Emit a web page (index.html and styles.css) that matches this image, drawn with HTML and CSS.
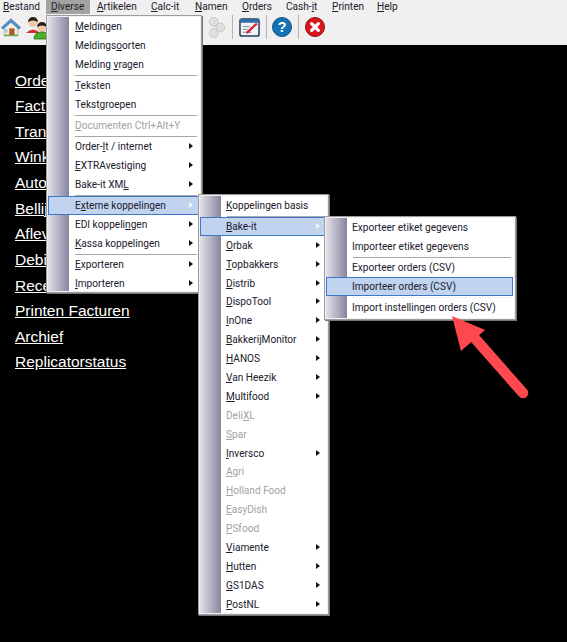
FILE: index.html
```html
<!DOCTYPE html>
<html lang="nl">
<head>
<meta charset="utf-8">
<title>Diverse</title>
<link rel="stylesheet" href="styles.css">
</head>
<body>
<nav class="menubar">
  <span class="top"><u>B</u>estand</span>
  <span class="top active"><u>D</u>iverse</span>
  <span class="top"><u>A</u>rtikelen</span>
  <span class="top"><u>C</u>alc-it</span>
  <span class="top"><u>N</u>amen</span>
  <span class="top"><u>O</u>rders</span>
  <span class="top">Cash-<u>i</u>t</span>
  <span class="top"><u>P</u>rinten</span>
  <span class="top"><u>H</u>elp</span>
</nav>
<div class="toolbar">
  <svg class="tool house" width="20" height="21" viewBox="0 0 22 24"><path d="M3 11v10h16V11L11 4z" fill="#f4efe2" stroke="#b9b3a4"/><path d="M0 12 11 2l11 10-2 2-9-8-9 8z" fill="#4f8fd0" stroke="#2b659f" stroke-width=".6"/><rect x="9" y="13" width="6" height="8" fill="#b0552c"/><rect x="4" y="14" width="3" height="4" fill="#9cc8ea"/><path d="M3 21h16" stroke="#6aa84f" stroke-width="2"/></svg>
  <svg class="tool people" width="26" height="25" viewBox="0 0 26 25"><circle cx="8" cy="7" r="5" fill="#f3c9a5"/><path d="M3 7a5 5 0 0 1 10 0q-5-3-10 0z" fill="#222"/><path d="M1 18q7-7 14 0z" fill="#c33"/><circle cx="17" cy="12" r="5" fill="#f3c9a5"/><path d="M12 12a5 5 0 0 1 10 0q-5-3-10 0z" fill="#222"/><path d="M9 24q0-7 8-7t8 7z" fill="#4bb02e" stroke="#1d6f12" stroke-width=".8"/></svg>
  <span class="tool-hidden"></span>
  <svg class="tool" width="19" height="21" viewBox="0 0 20 22"><g fill="#e6e6e6" stroke="#bdbdbd"><circle cx="7" cy="5" r="4.5"/><circle cx="14" cy="11" r="4.5"/><circle cx="7" cy="17" r="4.5"/></g><g fill="#f4f4f4" stroke="#c8c8c8"><circle cx="7" cy="5" r="1.5"/><circle cx="14" cy="11" r="1.5"/><circle cx="7" cy="17" r="1.5"/></g></svg>
  <i class="tool-sep"></i>
  <svg class="tool" width="21" height="20" viewBox="0 0 22 21"><rect x="1" y="2" width="20" height="18" rx="2" fill="#eef3f8" stroke="#24415f" stroke-width="1.6"/><rect x="1" y="2" width="20" height="4" fill="#2d6ca5"/><path d="M4 10h7M4 13h5M4 16h9" stroke="#7d8c9c"/><path d="M7 16 18 6l1.5 1.5L9 17.5z" fill="#d8232a"/></svg>
  <i class="tool-sep"></i>
  <svg class="tool" width="20" height="20" viewBox="0 0 21 21"><circle cx="10.500" cy="10.500" r="10" fill="#1772b4" stroke="#0d4f80"/><text class="help-mark" x="10.500" y="16" text-anchor="middle">?</text></svg>
  <i class="tool-sep"></i>
  <svg class="tool" width="20" height="20" viewBox="0 0 21 21"><circle cx="10.500" cy="10.500" r="10" fill="#d9161c" stroke="#8e0c10"/><path d="M7 7l7 7M14 7l-7 7" stroke="#fff" stroke-width="3.400" stroke-linecap="round"/></svg>
</div>
<main class="links">
  <a href="#">Orders</a>
  <a href="#">Facturen</a>
  <a href="#">Transport</a>
  <a href="#">Winkels</a>
  <a href="#">Automaten</a>
  <a href="#">Bellijst</a>
  <a href="#">Afleveringen</a>
  <a href="#">Debiteuren</a>
  <a href="#">Recepten</a>
  <a href="#">Printen Facturen</a>
  <a href="#">Archief</a>
  <a href="#">Replicatorstatus</a>
</main>

<div class="menu menu-one">
  <div class="item"><u>M</u>eldingen</div>
  <div class="item">Meldings<u>o</u>orten</div>
  <div class="item">Melding <u>v</u>ragen</div>
  <hr>
  <div class="item"><u>T</u>eksten</div>
  <div class="item">Tekst<u>g</u>roepen</div>
  <hr>
  <div class="item off"><u>D</u>ocumenten Ctrl+Alt+Y</div>
  <hr>
  <div class="item sub">Order-<u>I</u>t / internet</div>
  <div class="item sub"><u>E</u>XTRAvestiging</div>
  <div class="item sub">Bake-it XM<u>L</u></div>
  <hr>
  <div class="item sub on">E<u>x</u>terne koppelingen</div>
  <div class="item sub">EDI koppeli<u>n</u>gen</div>
  <div class="item sub"><u>K</u>assa koppelingen</div>
  <hr>
  <div class="item sub"><u>E</u>xporteren</div>
  <div class="item sub"><u>I</u>mporteren</div>
</div>

<div class="menu menu-two">
  <div class="item"><u>K</u>oppelingen basis</div>
  <hr>
  <div class="item sub on"><u>B</u>ake-it</div>
  <div class="item sub"><u>O</u>rbak</div>
  <div class="item sub"><u>T</u>opbakkers</div>
  <div class="item sub"><u>D</u>istrib</div>
  <div class="item sub"><u>D</u>ispoTool</div>
  <div class="item sub"><u>I</u>nOne</div>
  <div class="item sub"><u>B</u>akkerijMonitor</div>
  <div class="item sub"><u>H</u>ANOS</div>
  <div class="item sub"><u>V</u>an Heezik</div>
  <div class="item sub"><u>M</u>ultifood</div>
  <div class="item off">Deli<u>X</u>L</div>
  <div class="item off"><u>S</u>par</div>
  <div class="item sub"><u>I</u>nversco</div>
  <div class="item off"><u>A</u>gri</div>
  <div class="item off"><u>H</u>olland Food</div>
  <div class="item off"><u>E</u>asyDish</div>
  <div class="item off"><u>P</u>Sfood</div>
  <div class="item sub"><u>V</u>iamente</div>
  <div class="item sub"><u>H</u>utten</div>
  <div class="item sub"><u>G</u>S1DAS</div>
  <div class="item sub"><u>P</u>ostNL</div>
</div>

<div class="menu menu-three">
  <div class="item">Exporteer etiket gegevens</div>
  <div class="item">Importeer etiket gegevens</div>
  <hr>
  <div class="item">Exporteer orders (CSV)</div>
  <div class="item on">Importeer orders (CSV)</div>
  <hr class="faint">
  <div class="item">Import instellingen orders (CSV)</div>
</div>

<svg class="arrow" width="90" height="96" viewBox="0 0 90 96"><path d="M73 82 22 24" stroke="#fd484d" stroke-width="10.500" stroke-linecap="round"/><path d="M2 5 35 19 11 40z" fill="#fd484d"/></svg>
</body>
</html>
```

FILE: styles.css
```css
* { box-sizing: border-box; }
html, body { margin: 0; height: 100%; }
body {
  position: relative;
  overflow: hidden;
  width: 567px;
  height: 642px;
  background: #000;
  font-family: Roboto, "Open Sans", sans-serif;
  font-size: 10.100px;
  color: #20202c;
}
.menubar {
  display: flex;
  height: 14px;
  background: #f0f0f0;
  line-height: 14px;
}
.top { flex: none; padding-left: 7px; white-space: nowrap; }
.top:nth-child(1) { width: 46px; padding-left: 3px; }
.top:nth-child(2) { width: 44px; padding-left: 5px; }
.top:nth-child(3) { width: 54px; }
.top:nth-child(4) { width: 44px; }
.top:nth-child(5) { width: 47px; }
.top:nth-child(6) { width: 44px; }
.top:nth-child(7) { width: 46px; }
.top:nth-child(8) { width: 45px; }
.top.active { background: #a3a3a3; }
.toolbar {
  display: flex;
  align-items: center;
  height: 31px;
  padding: 0 0 5px 1px;
  background: #f0f0f0;
}
.tool { flex: none; }
.people { margin-left: 4px; }
.tool-hidden { width: 156px; flex: none; }
.tool-sep { flex: none; width: 1px; height: 24px; margin: 0 5.500px 0 6px; background: #b4b4b4; }
.help-mark { font: bold 15px "Liberation Sans", sans-serif; fill: #fff; }
.links {
  display: flex;
  flex-direction: column;
  gap: 8.640px;
  padding: 26.600px 0 0 15px;
  font: 15.500px/17px "Liberation Sans", Arial, sans-serif;
}
.links a { color: #fff; align-self: flex-start; }

.menu {
  position: absolute;
  padding: 1px 2px 2px 1px;
  background: #fff linear-gradient(90deg, #e2e2ea, #87849f) no-repeat 1px 0 / 21px 100%;
  border: 1px solid #9c9c9c;
  box-shadow: inset 0 0 0 1px #f0f0f0, 1px 1px 0 #777;
}
.menu-one { left: 46px; top: 15px; width: 156px; height: 278px; }
.menu-two { left: 198px; top: 194px; width: 131px; height: 421px; }
.menu-three { left: 324px; top: 216px; width: 192px; height: 104px; }
.item {
  position: relative;
  height: 19px;
  line-height: 20px;
  padding-left: 27px;
  white-space: nowrap;
}
.menu-two .item { height: 18.900px; padding-left: 26px; }
.menu-three .item { padding-left: 26px; }
.item.on {
  background: #c0d3ef;
  box-shadow: inset 0 0 0 1px #3f78c8;
}
.item.off { color: #a2a2a2; }
.sub::after {
  content: "";
  position: absolute;
  right: 6px;
  top: 6px;
  border-left: 4px solid #111;
  border-top: 3.500px solid transparent;
  border-bottom: 3.500px solid transparent;
}
.sub.on::after { border-left-color: #f4f6fb; }
hr {
  height: 1px;
  margin: 1px 2px 0 27px;
  border: 0;
  background: #a8a8a8;
}
hr.faint { background: #f0f0f0; }
.arrow { position: absolute; left: 450px; top: 311px; }
```
